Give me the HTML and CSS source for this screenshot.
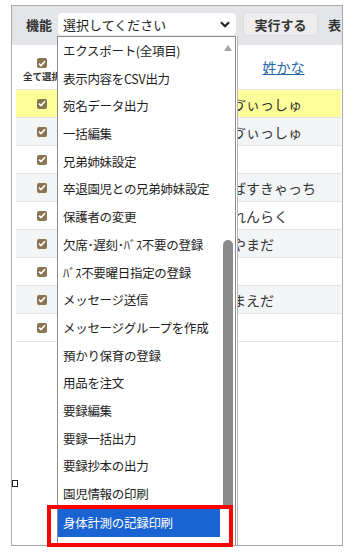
FILE: index.html
```html
<!DOCTYPE html>
<html lang="ja">
<head>
    <meta charset="UTF-8">
    <meta name="viewport" content="width=device-width, initial-scale=1.0">
    <title>園児一覧</title>
    <link rel="stylesheet" href="styles.css">
</head>
<body>
<div class="page">

    <div class="panel">
        <!-- 機能バー -->
        <div class="toolbar">
            <span class="tool-label">機能</span>
            <div class="select-box">
                <span>選択してください</span>
                <svg class="chevron" width="10" height="7" viewBox="0 0 10 7"><path d="M1 1.2 L5 5.2 L9 1.2" fill="none" stroke="#222" stroke-width="2.2"/></svg>
            </div>
            <button class="run-btn">実行する</button>
            <span class="tool-label more">表</span>
        </div>

        <!-- 一覧 -->
        <div class="list">
            <div class="list-head">
                <div class="col-check">
                    <span class="chk"><svg width="8" height="7" viewBox="0 0 8 7"><path d="M1 3.6 L3 5.6 L7 1.2" fill="none" stroke="#fff" stroke-width="1.6"/></svg></span>
                    <span class="all-label">全て選択</span>
                </div>
                <div class="col-name"></div>
                <div class="col-kana"><a href="#">姓かな</a></div>
            </div>

            <div class="row current">
                <div class="col-check"><span class="chk"><svg width="8" height="7" viewBox="0 0 8 7"><path d="M1 3.6 L3 5.6 L7 1.2" fill="none" stroke="#fff" stroke-width="1.6"/></svg></span></div>
                <div class="col-name"></div>
                <div class="col-kana">ゔぃっしゅ</div>
            </div>
            <div class="row">
                <div class="col-check"><span class="chk"><svg width="8" height="7" viewBox="0 0 8 7"><path d="M1 3.6 L3 5.6 L7 1.2" fill="none" stroke="#fff" stroke-width="1.6"/></svg></span></div>
                <div class="col-name"></div>
                <div class="col-kana">ゔぃっしゅ</div>
            </div>
            <div class="row">
                <div class="col-check"><span class="chk"><svg width="8" height="7" viewBox="0 0 8 7"><path d="M1 3.6 L3 5.6 L7 1.2" fill="none" stroke="#fff" stroke-width="1.6"/></svg></span></div>
                <div class="col-name"></div>
                <div class="col-kana"></div>
            </div>
            <div class="row">
                <div class="col-check"><span class="chk"><svg width="8" height="7" viewBox="0 0 8 7"><path d="M1 3.6 L3 5.6 L7 1.2" fill="none" stroke="#fff" stroke-width="1.6"/></svg></span></div>
                <div class="col-name"></div>
                <div class="col-kana">ばすきゃっち</div>
            </div>
            <div class="row">
                <div class="col-check"><span class="chk"><svg width="8" height="7" viewBox="0 0 8 7"><path d="M1 3.6 L3 5.6 L7 1.2" fill="none" stroke="#fff" stroke-width="1.6"/></svg></span></div>
                <div class="col-name"></div>
                <div class="col-kana">れんらく</div>
            </div>
            <div class="row">
                <div class="col-check"><span class="chk"><svg width="8" height="7" viewBox="0 0 8 7"><path d="M1 3.6 L3 5.6 L7 1.2" fill="none" stroke="#fff" stroke-width="1.6"/></svg></span></div>
                <div class="col-name"></div>
                <div class="col-kana">やまだ</div>
            </div>
            <div class="row">
                <div class="col-check"><span class="chk"><svg width="8" height="7" viewBox="0 0 8 7"><path d="M1 3.6 L3 5.6 L7 1.2" fill="none" stroke="#fff" stroke-width="1.6"/></svg></span></div>
                <div class="col-name"></div>
                <div class="col-kana"></div>
            </div>
            <div class="row">
                <div class="col-check"><span class="chk"><svg width="8" height="7" viewBox="0 0 8 7"><path d="M1 3.6 L3 5.6 L7 1.2" fill="none" stroke="#fff" stroke-width="1.6"/></svg></span></div>
                <div class="col-name"></div>
                <div class="col-kana">まえだ</div>
            </div>
            <div class="row">
                <div class="col-check"><span class="chk"><svg width="8" height="7" viewBox="0 0 8 7"><path d="M1 3.6 L3 5.6 L7 1.2" fill="none" stroke="#fff" stroke-width="1.6"/></svg></span></div>
                <div class="col-name"></div>
                <div class="col-kana"></div>
            </div>
        </div>
    </div>

    <!-- 開いた状態の選択リスト -->
    <div class="dropdown">
        <ul class="menu">
            <li>エクスポート(全項目)</li>
            <li>表示内容をCSV出力</li>
            <li>宛名データ出力</li>
            <li>一括編集</li>
            <li>兄弟姉妹設定</li>
            <li>卒退園児との兄弟姉妹設定</li>
            <li>保護者の変更</li>
            <li>欠席･遅刻･ﾊﾞｽ不要の登録</li>
            <li>ﾊﾞｽ不要曜日指定の登録</li>
            <li>メッセージ送信</li>
            <li>メッセージグループを作成</li>
            <li>預かり保育の登録</li>
            <li>用品を注文</li>
            <li>要録編集</li>
            <li>要録一括出力</li>
            <li>要録抄本の出力</li>
            <li>園児情報の印刷</li>
            <li class="selected">身体計測の記録印刷</li>
        </ul>
        <div class="scroll-up"></div>
        <div class="scroll-thumb"></div>
    </div>

    <!-- 赤枠の注記 -->
    <div class="callout"></div>
    <span class="edge-mark"></span>
</div>
</body>
</html>
```

FILE: styles.css
```css
/* Base */
body {
    margin: 0;
    background: #fff;
    font-family: "Noto Sans CJK JP", "Noto Sans", sans-serif;
    color: #222;
}

.page {
    position: relative;
    width: 351px;
    height: 558px;
    overflow: hidden;
}

.panel {
    margin: 5px 0 0 11px;
    width: 332px;
    height: 541px;
    box-sizing: border-box;
    border: 1px solid #a9a9a9;
    overflow: hidden;
}

/* Toolbar */
.toolbar {
    display: flex;
    align-items: center;
    height: 39px;
    padding: 0 0 3px 14px;
    box-sizing: border-box;
    background: #e3e5e8;
    white-space: nowrap;
}

.toolbar > * {
    flex-shrink: 0;
}

.tool-label {
    font-size: 13px;
    font-weight: bold;
    color: #333;
}

.tool-label.more {
    margin-left: 10px;
}

.select-box {
    display: flex;
    align-items: center;
    justify-content: space-between;
    width: 178px;
    height: 22px;
    margin-left: 6px;
    padding: 0 6px 0 5px;
    box-sizing: border-box;
    background: #fff;
    border-radius: 4px;
    font-size: 13px;
    color: #222;
}

.run-btn {
    width: 75px;
    height: 24px;
    margin-left: 7px;
    padding: 0;
    border: 1px solid #dcdcdc;
    border-radius: 4px;
    background: #ededed;
    font-family: inherit;
    font-size: 13px;
    font-weight: bold;
    color: #333;
}

/* List table */
.list {
    padding: 0 1px 0 4px;
}

.list-head,
.row {
    display: flex;
    box-sizing: border-box;
}

.list-head {
    height: 45px;
    border-bottom: 1px solid #e6e6e6;
}

.col-check {
    width: 52px;
    flex-shrink: 0;
    display: flex;
    flex-direction: column;
    align-items: center;
    justify-content: center;
}

.list-head .col-check {
    justify-content: flex-start;
    padding-top: 13px;
}

.col-name {
    width: 164px;
    flex-shrink: 0;
}

.col-kana {
    flex: 1;
    display: flex;
    align-items: center;
    font-size: 14px;
    color: #333;
    white-space: nowrap;
}

.list-head .col-kana {
    justify-content: center;
    padding-right: 6px;
}

.list-head .col-kana a {
    color: #2467a8;
    font-size: 14px;
}

.all-label {
    margin-top: 1px;
    font-size: 9.5px;
    font-weight: bold;
    color: #333;
    white-space: nowrap;
}

.chk {
    display: flex;
    align-items: center;
    justify-content: center;
    width: 10px;
    height: 10px;
    border-radius: 2px;
    background: #8a7553;
}

.row {
    height: 28px;
    border-bottom: 1px solid #e3e3e3;
}

.row:nth-child(odd) {
    background: #f3f4f6;
}

.row.current {
    background: #ffff99;
}

/* Opened select list */
.dropdown {
    position: absolute;
    left: 57px;
    top: 36px;
    width: 179px;
    height: 509px;
    box-sizing: border-box;
    border: 1px solid #8d8d8d;
    border-bottom: none;
    background: #fff;
    box-shadow: 1px 0 0 #fff, 2px 0 0 #b8b8b8;
}

.menu {
    list-style: none;
    margin: 0;
    padding: 0;
    width: 164px;
}

.menu li {
    height: 27.7px;
    line-height: 27.7px;
    padding-left: 5px;
    font-size: 12.5px;
    letter-spacing: -0.3px;
    color: #1e1e1e;
    white-space: nowrap;
}

.menu li.selected {
    height: 28px;
    line-height: 28px;
    margin: 1px 2px 0 0;
    background: #1a63d3;
    color: #fff;
}

.scroll-up {
    position: absolute;
    left: 166px;
    top: 8px;
    width: 0;
    height: 0;
    border-left: 4.5px solid transparent;
    border-right: 4.5px solid transparent;
    border-bottom: 6px solid #a3a3a3;
}

.scroll-thumb {
    position: absolute;
    left: 165px;
    top: 203px;
    width: 10px;
    height: 268px;
    border-radius: 5px 5px 0 0;
    background: #8b8b8b;
}

/* Annotation */
.callout {
    position: absolute;
    left: 47px;
    top: 505px;
    width: 186px;
    height: 42px;
    box-sizing: border-box;
    border: 4px solid #ff0000;
}

.edge-mark {
    position: absolute;
    left: 12px;
    top: 480px;
    width: 4px;
    height: 5px;
    border: 1px solid #222;
}
```
